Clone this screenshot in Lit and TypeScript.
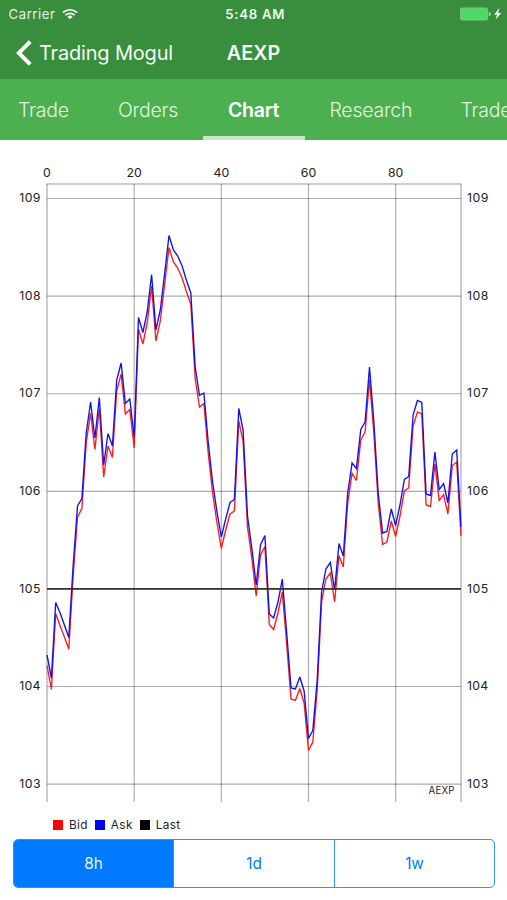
import { LitElement, html, svg, css } from "lit";
import { customElement, state } from "lit/decorators.js";
import { classMap } from "lit/directives/class-map.js";

// Chart geometry: the plot starts at x = 47, one sample every 4.358 px.
const X0 = 47;
const STEP = 4.358;
const TOP = 184;
const BOTTOM = 802;
const RIGHT = 461;
const OFFSET = 140;

// Vertical position of each [ask, bid] sample on the canvas.
const SAMPLES: [number, number][] = [
  [655, 665.5], [678, 689.5], [602.5, 613.5], [613, 626], [625, 637], [637.5, 649], [566, 577], [506, 517],
  [498.5, 508.5], [433, 443], [402, 413], [438, 449.5], [397.5, 408.5], [465, 477], [433.5, 446], [446, 457.5],
  [380, 391], [363, 374], [403.5, 414], [399, 409.5], [437.5, 448], [317.5, 329], [332.5, 344], [312, 323],
  [274.5, 286], [330, 341], [310, 321], [273, 284], [235.5, 247.5], [250, 262], [256, 268], [266, 278],
  [280.5, 292], [293, 304], [367, 379], [395.5, 407], [393, 403.5], [442, 453], [482, 493], [512, 523],
  [537, 548.5], [519, 530], [502.5, 514], [499.5, 511], [408.5, 421], [430, 441.5], [516, 527], [548, 558],
  [585, 596], [545, 555], [535.5, 546.5], [614, 624.5], [618, 629.5], [602, 613], [579, 592], [633, 644],
  [688, 699], [689, 700.5], [677, 688.5], [691, 703], [738.5, 750.5], [730.5, 742], [680, 690], [592, 602],
  [569, 579], [562.5, 573], [590, 602], [543.5, 555.5], [556, 567], [493, 503], [463, 473.5], [468.5, 480.5],
  [429.5, 440], [422, 432], [367, 379.5], [421, 432], [493, 503], [533, 544.5], [531.5, 542], [509, 521],
  [525.5, 536.5], [505, 516], [479.5, 491], [476.5, 488], [415, 426], [400.5, 412], [402.5, 414], [494, 505],
  [495.5, 506.5], [452, 464], [489.5, 500.5], [483.5, 494.5], [503, 514], [454, 465.5], [450, 462], [527, 536],
];

const line = (k: 0 | 1) =>
  SAMPLES.map((s, i) => `${(X0 + i * STEP).toFixed(1)},${s[k] - OFFSET}`).join(" ");

@customElement("price-chart")
class PriceChart extends LitElement {
  static styles = css`
    :host { display: block; height: 670px; }
    svg { display: block; }
    text { font-family: Inter, "Liberation Sans", sans-serif; fill: #222; }
    .axis { font-size: 12.3px; }
    .end { text-anchor: end; }
    .mid { text-anchor: middle; }
    .note { font-size: 9.7px; }
    .grid { stroke: #000; stroke-opacity: 0.33; stroke-width: 1.15; }
    .frame { stroke: #000; stroke-opacity: 0.27; stroke-width: 1.5; }
    .last { stroke: #333; stroke-width: 1.9; }
    .ask, .bid { fill: none; stroke-width: 1.35; stroke-linejoin: miter; stroke-miterlimit: 3; }
    .ask { stroke: #1010f0; }
    .bid { stroke: #ff1a1a; }
  `;

  render() {
    const rows = [109, 108, 107, 106, 105, 104, 103];
    const cols = [0, 20, 40, 60, 80];
    const y = (p: number) => 198.5 + (109 - p) * 97.6 - OFFSET;
    const top = TOP - OFFSET;
    const bottom = BOTTOM - OFFSET;
    return html`<svg width="507" height="670" viewBox="0 0 507 670">
      <line class="frame" x1="46.5" x2=${RIGHT} y1=${top} y2=${top}></line>
      ${rows.map((p) => svg`
        <line class="grid" x1="47" x2=${RIGHT} y1=${y(p)} y2=${y(p)} />
        <text class="axis end" x="40.5" y=${y(p) + 3.6} textLength=${21.3}>${p}</text>
        <text class="axis" x="467" y=${y(p) + 3.6} textLength=${21.3}>${p}</text>`)}
      ${cols.map((c) => svg`
        <line class=${c ? "grid" : "frame"} x1=${X0 + c * STEP} x2=${X0 + c * STEP} y1=${top} y2=${bottom} />
        <text class="axis mid" x=${X0 + c * STEP} y="36.5">${c}</text>`)}
      <line class="frame" x1=${RIGHT} x2=${RIGHT} y1=${top} y2=${bottom}></line>
      <polyline class="bid" points=${line(1)}></polyline>
      <polyline class="ask" points=${line(0)}></polyline>
      <line class="last" x1="47" x2=${RIGHT} y1=${y(105)} y2=${y(105)}></line>
      <text class="note end" x="454.5" y="654.4" textLength="26">AEXP</text
    ></svg>`;
  }
}

@customElement("app-root")
class AppRoot extends LitElement {
  @state() range = "8h";

  static styles = css`
    :host {
      display: flex; flex-direction: column; width: 507px; height: 900px; overflow: hidden;
      background: #fff; font-family: Inter, "Liberation Sans", sans-serif;
    }
    .status {
      height: 27px; box-sizing: border-box; background: #388e3c; color: #fff; padding: 0 5px 0 8.5px;
      display: grid; grid-template-columns: 1fr auto 1fr; align-items: center; font-size: 13.2px;
    }
    .carrier { display: flex; align-items: center; gap: 6px; color: #e4f2e5; letter-spacing: 0.55px; }
    .clock { font-weight: 600; color: #eef8ee; letter-spacing: 0.75px; }
    .power { display: flex; justify-content: flex-end; align-items: center; }
    .nav {
      height: 52px; box-sizing: border-box; background: #388e3c; color: #f4fbf4; padding: 0 16px;
      display: grid; grid-template-columns: 1fr auto 1fr; align-items: center;
    }
    .back { display: flex; align-items: center; gap: 6px; font-size: 20px; letter-spacing: -0.18px; white-space: nowrap; }
    .title { font-size: 19.8px; font-weight: 600; letter-spacing: 0; }
    .tabs {
      height: 61px; background: #4caf50; display: grid; flex: none; margin-left: -7px;
      grid-template-columns: 100px 110px 101.5px 131px 110px;
    }
    .tab {
      box-sizing: border-box; padding: 4px 0 0 25px; display: flex; align-items: center;
      font-size: 19.5px; letter-spacing: -0.25px; font-weight: 300; color: #e2f5df;
      border-bottom: 4px solid transparent;
    }
    .active { font-weight: 600; color: #fff; border-bottom-color: #c8e6c9; }
    .legend {
      height: 29px; box-sizing: border-box; padding: 0 53px; display: flex; align-items: center;
      font-size: 11.8px; letter-spacing: 0.35px; color: #222;
    }
    .key { display: flex; align-items: center; gap: 6px; margin-right: 7px; }
    .swatch { width: 10px; height: 10px; }
    .red { background: #f00; }
    .blue { background: #00f; }
    .black { background: #000; }
    .segments {
      margin: 0 12px 0 13px; height: 49px; box-sizing: border-box; border: 1.5px solid #2f8ff5;
      border-radius: 5px; display: grid; grid-template-columns: 159px 161px 1fr; overflow: hidden;
    }
    .segment {
      display: flex; align-items: center; justify-content: center; font-size: 15.3px; color: #007aff;
    }
    .segment + .segment { border-left: 1.5px solid #2f8ff5; }
    .chosen { background: #007aff; color: #e4f2ff; }
  `;

  render() {
    const tabs = ["Trade", "Orders", "Chart", "Research", "Trades"];
    const keys = [["Bid", "red"], ["Ask", "blue"], ["Last", "black"]];
    return html`
      <div class="status">
        <div class="carrier">
          <span>Carrier</span>
          <svg width="16" height="12" viewBox="0 0 16 12" fill="none" stroke="#f0f8f0" stroke-width="1.7">
            <path d="M1 4.6a10 10 0 0 1 14 0M3.4 7.2a6.6 6.6 0 0 1 9.2 0"></path>
            <path d="M8 11.2 5.4 8.8a3.8 3.8 0 0 1 5.2 0z" fill="#f0f8f0" stroke="none"></path>
          </svg>
        </div>
        <div class="clock">5:48 AM</div>
        <div class="power">
          <svg width="42" height="14" viewBox="0 0 42 14">
            <rect x="0" y="0.6" width="28" height="12.8" rx="2.2" fill="#7bc884"></rect>
            <rect x="1" y="1.6" width="26" height="10.8" rx="1.2" fill="#4cd964"></rect>
            <path d="M28.8 4.8q2 .5 2 2.2t-2 2.2z" fill="#a5dba9"></path>
            <path d="M39.3 1 34.2 7.8h2.9l-1.6 5L41.2 6h-3z" fill="#f4fff4"></path>
          </svg>
        </div>
      </div>
      <div class="nav">
        <div class="back">
          <svg width="17" height="26" viewBox="0 0 17 26" fill="none" stroke="#fff" stroke-width="4">
            <path d="M14.2 1.6 2.8 13l11.4 11.4"></path>
          </svg>
          <span>Trading Mogul</span>
        </div>
        <div class="title">AEXP</div>
      </div>
      <div class="tabs">
        ${tabs.map((t) => html`<div class=${classMap({ tab: true, active: t === "Chart" })}>${t}</div>`)}
      </div>
      <price-chart></price-chart>
      <div class="legend">
        ${keys.map(([n, c]) => html`<div class="key"><span class="swatch ${c}"></span>${n}</div>`)}
      </div>
      <div class="segments">
        ${["8h", "1d", "1w"].map((r) => html`<div
          class=${classMap({ segment: true, chosen: r === this.range })}
          @click=${() => (this.range = r)}>${r}</div>`)}
      </div>
    `;
  }
}
